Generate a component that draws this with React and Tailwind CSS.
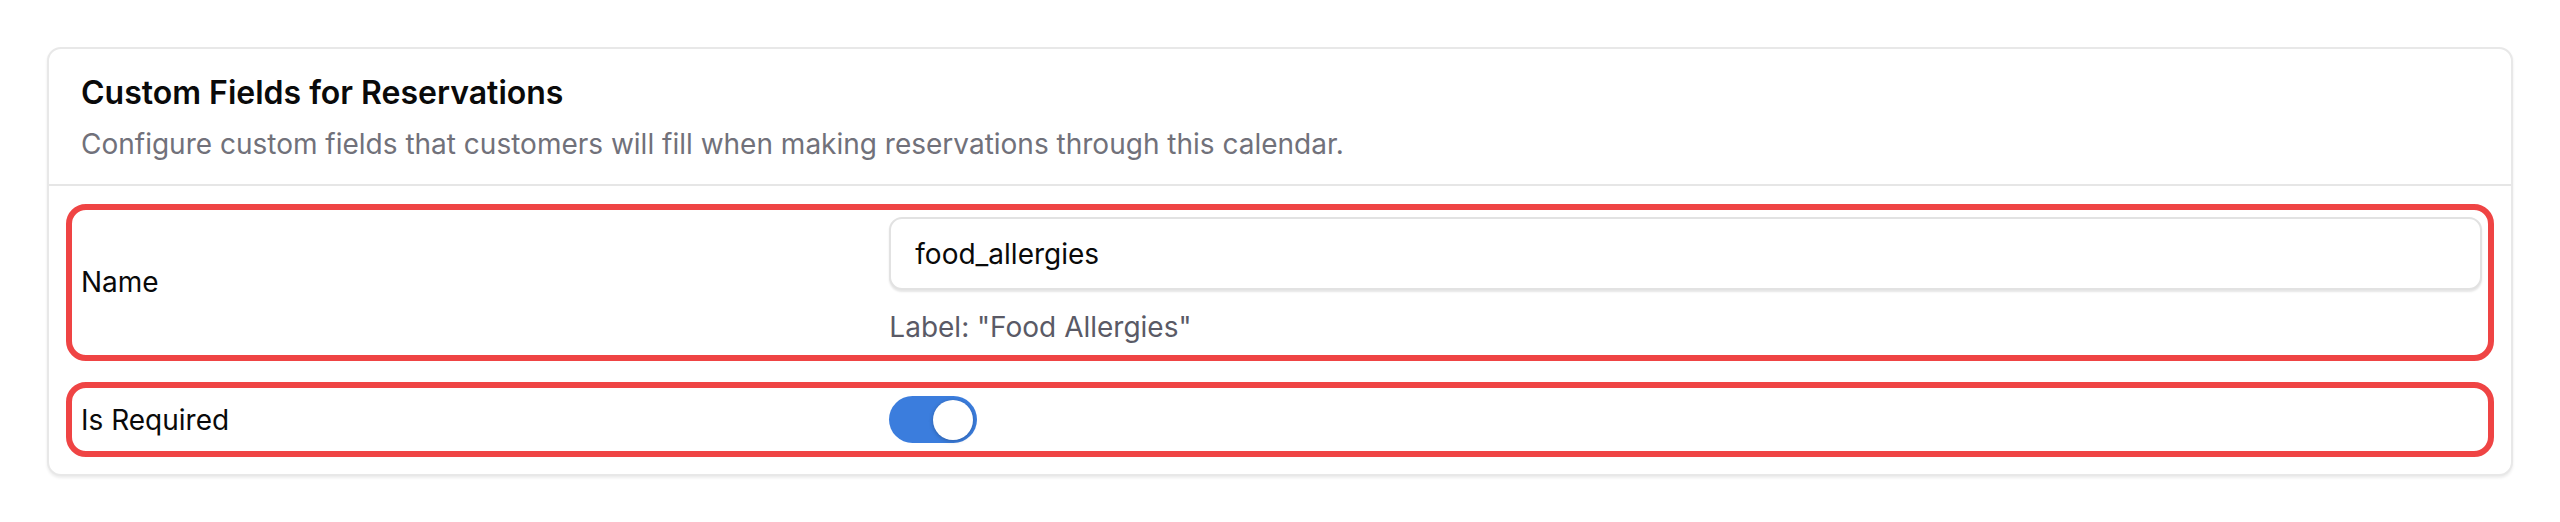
import { useState } from "react";

function Toggle({ checked, onChange }) {
  return (
    <button
      type="button"
      role="switch"
      aria-checked={checked}
      onClick={() => onChange(!checked)}
      className={`relative flex h-[47px] w-[88px] items-center rounded-full px-[4px] ${
        checked ? "bg-[#3b7ddd]" : "bg-[#d4d4d8]"
      }`}
    >
      <span
        className={`block h-[40px] w-[40px] rounded-full bg-white shadow-[0_1px_4px_rgba(0,0,0,0.25)] ${
          checked ? "ml-auto" : ""
        }`}
      />
    </button>
  );
}

export default function App() {
  const [required, setRequired] = useState(true);
  const [name, setName] = useState("food_allergies");

  return (
    <div className="min-h-[522px] bg-white p-[47px] font-['Inter',sans-serif] text-[#0a0a0a]">
      <section className="rounded-[14px] border-2 border-[#e8e8e8] bg-white shadow-[0_2px_3px_rgba(0,0,0,0.08)]">
        <header className="border-b-2 border-[#e6e6e6] px-[32px] pb-[20px] pt-[24px]">
          <h2 className="text-[32px] font-semibold leading-[40px]">Custom Fields for Reservations</h2>
          <p className="mt-[11px] text-[28px] leading-[40px] text-[#71717a]">
            Configure custom fields that customers will fill when making reservations through this calendar.
          </p>
        </header>

        <div className="flex flex-col gap-[21px] px-[17px] pb-[17px] pt-[18px]">
          <div className="grid grid-cols-3 items-center gap-x-6 rounded-[20px] border-[6px] border-[#ef4444] pb-[8px] pl-[9px] pr-[6px] pt-[7px]">
            <label className="text-[28px] leading-[40px]">Name</label>
            <div className="col-span-2">
              <input
                value={name}
                onChange={(e) => setName(e.target.value)}
                className="h-[73px] w-full rounded-[13px] border-2 border-[#e2e2e2] bg-white px-[24px] text-[28px] text-[#0a0a0a] shadow-[0_2px_2px_rgba(0,0,0,0.1)] outline-none"
              />
              <p className="mt-[17px] text-[28px] leading-[40px] text-[#5a5a66]">Label: "Food Allergies"</p>
            </div>
          </div>

          <div className="grid grid-cols-3 items-center gap-x-6 rounded-[20px] border-[6px] border-[#ef4444] py-[8px] pl-[9px] pr-[6px]">
            <span className="text-[28px] leading-[40px]">Is Required</span>
            <div className="col-span-2 flex">
              <Toggle checked={required} onChange={setRequired} />
            </div>
          </div>
        </div>
      </section>
    </div>
  );
}
